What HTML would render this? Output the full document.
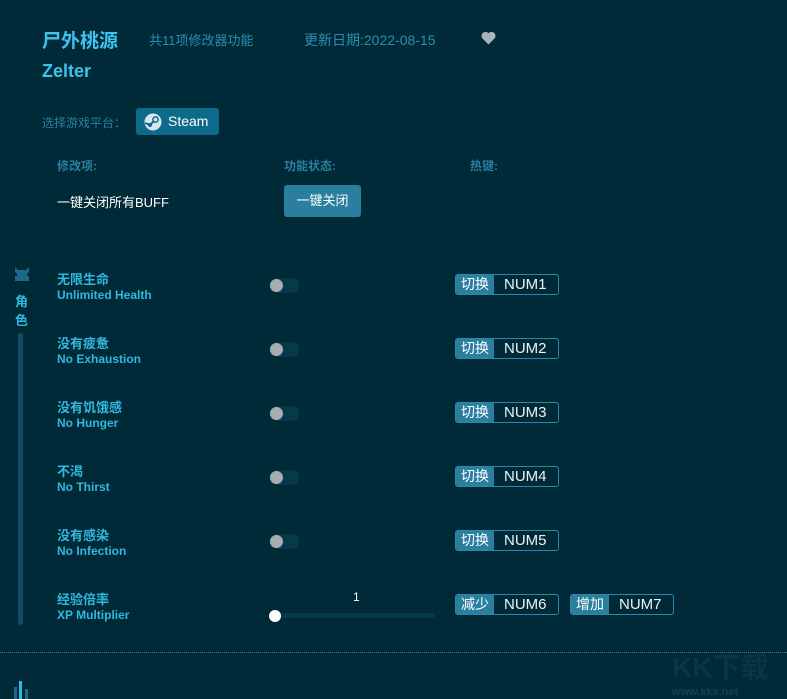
<!DOCTYPE html>
<html><head><meta charset="utf-8"><style>
body{margin:0;width:787px;height:699px;background:#012a38;font-family:"Liberation Sans","Noto Sans CJK SC",sans-serif;position:relative;overflow:hidden;color:#fff}
.a{position:absolute;white-space:nowrap}
.cn{color:#2fb8e0;font-size:13px;font-weight:bold}
.en{color:#2fb8e0;font-size:12px;font-weight:bold}
.tg{position:absolute;left:269px;width:30px;height:15px;border-radius:8px;background:#06394c}
.tg:before{content:"";position:absolute;left:1px;top:1px;width:13px;height:13px;border-radius:50%;background:#a8acae}
.hk{position:absolute;height:19px;border:1px solid #2a8aaa;border-radius:3px;display:flex;font-size:15px;overflow:hidden}
.hk b{font-weight:normal;background:#2a7f9e;padding:0 5px;line-height:19px;font-size:14px}
.hk i{font-style:normal;padding:0 11px 0 10px;line-height:19px;color:#e8f4f8}
</style></head><body>
<div class="a" style="left:42px;top:26px;font-size:19px;font-weight:bold;color:#3ec2ee">尸外桃源</div>
<div class="a" style="left:149px;top:30px;font-size:13px;color:#2a8eb0">共11项修改器功能</div>
<div class="a" style="left:304px;top:30px;font-size:14px;color:#2a8eb0">更新日期:2022-08-15</div>
<svg class="a" style="left:481px;top:31px" width="15" height="14" viewBox="0 0 15 14"><path d="M7.5 13.5L1.5 7.5A3.6 3.6 0 0 1 7.5 2.2A3.6 3.6 0 0 1 13.5 7.5Z" fill="#a8b4bc"/></svg>
<div class="a" style="left:42px;top:61px;font-size:18px;font-weight:bold;color:#3ec2ee">Zelter</div>
<div class="a" style="left:42px;top:114px;font-size:12px;color:#2a7f9e">选择游戏平台：</div>
<div class="a" style="left:136px;top:108px;width:83px;height:27px;background:#0d6a8a;border-radius:3px">
<svg style="position:absolute;left:8px;top:5px" width="18" height="18" viewBox="0 0 18 18"><circle cx="9" cy="9" r="8.5" fill="#d8e6ee"/><circle cx="11.5" cy="6.5" r="2.6" fill="none" stroke="#0d6a8a" stroke-width="1.5"/><path d="M1 10l5 2 4-4" stroke="#0d6a8a" stroke-width="2" fill="none"/><circle cx="6" cy="12" r="2" fill="#0d6a8a"/></svg>
<span class="a" style="left:32px;top:5px;font-size:14px;color:#fff">Steam</span></div>
<div class="a" style="left:57px;top:157px;font-size:12px;font-weight:bold;color:#2a7f9e">修改项:</div>
<div class="a" style="left:284px;top:157px;font-size:12px;font-weight:bold;color:#2a7f9e">功能状态:</div>
<div class="a" style="left:470px;top:157px;font-size:12px;font-weight:bold;color:#2a7f9e">热键:</div>
<div class="a" style="left:57px;top:192px;font-size:13px">一键关闭所有BUFF</div>
<div class="a" style="left:284px;top:185px;width:77px;height:32px;background:#2a7f9e;border-radius:3px;font-size:13px;text-align:center;line-height:32px">一键关闭</div>
<svg class="a" style="left:13px;top:265px" width="18" height="18" viewBox="0 0 18 18"><path d="M2 2l3 3h8l3-3v5l-2 2v2h2v5H2v-5h2V9L2 7z" fill="#1e6a86"/></svg>
<div class="a" style="left:15px;top:292px;font-size:13px;color:#2fb8e0;font-weight:bold;line-height:19px;white-space:normal;width:14px">角<br>色</div>
<div class="a" style="left:18px;top:333px;width:5px;height:292px;background:#114d64;border-radius:3px"></div>

<div class="a cn" style="left:57px;top:269px">无限生命</div><div class="a en" style="left:57px;top:288px">Unlimited Health</div><div class="tg" style="top:278px"></div>
<div class="hk" style="left:455px;top:274px"><b>切换</b><i>NUM1</i></div>
<div class="a cn" style="left:57px;top:333px">没有疲惫</div><div class="a en" style="left:57px;top:352px">No Exhaustion</div><div class="tg" style="top:342px"></div>
<div class="hk" style="left:455px;top:338px"><b>切换</b><i>NUM2</i></div>
<div class="a cn" style="left:57px;top:397px">没有饥饿感</div><div class="a en" style="left:57px;top:416px">No Hunger</div><div class="tg" style="top:406px"></div>
<div class="hk" style="left:455px;top:402px"><b>切换</b><i>NUM3</i></div>
<div class="a cn" style="left:57px;top:461px">不渴</div><div class="a en" style="left:57px;top:480px">No Thirst</div><div class="tg" style="top:470px"></div>
<div class="hk" style="left:455px;top:466px"><b>切换</b><i>NUM4</i></div>
<div class="a cn" style="left:57px;top:525px">没有感染</div><div class="a en" style="left:57px;top:544px">No Infection</div><div class="tg" style="top:534px"></div>
<div class="hk" style="left:455px;top:530px"><b>切换</b><i>NUM5</i></div>
<div class="a cn" style="left:57px;top:589px">经验倍率</div><div class="a en" style="left:57px;top:608px">XP Multiplier</div>
<div class="a" style="left:353px;top:590px;font-size:12px">1</div>
<div class="a" style="left:275px;top:613px;width:160px;height:5px;background:#06394c;border-radius:3px"></div>
<div class="a" style="left:269px;top:610px;width:12px;height:12px;border-radius:50%;background:#fff"></div>
<div class="hk" style="left:455px;top:594px"><b>减少</b><i>NUM6</i></div>
<div class="hk" style="left:570px;top:594px"><b>增加</b><i>NUM7</i></div>
<div class="a" style="left:0;top:652px;width:787px;border-top:1px dotted #2a7f9e"></div>
<div class="a" style="left:14px;top:687px;width:3px;height:12px;background:#1e6a86"></div>
<div class="a" style="left:19px;top:681px;width:3px;height:18px;background:#2fb8e0"></div>
<div class="a" style="left:25px;top:689px;width:3px;height:10px;background:#1e6a86"></div>
<div class="a" style="left:672px;top:646px;font-size:28px;font-weight:bold;color:#0a3544">KK下载</div>
<div class="a" style="left:672px;top:686px;font-size:11px;font-weight:bold;color:#17404e">www.kkx.net</div>
</body></html>
